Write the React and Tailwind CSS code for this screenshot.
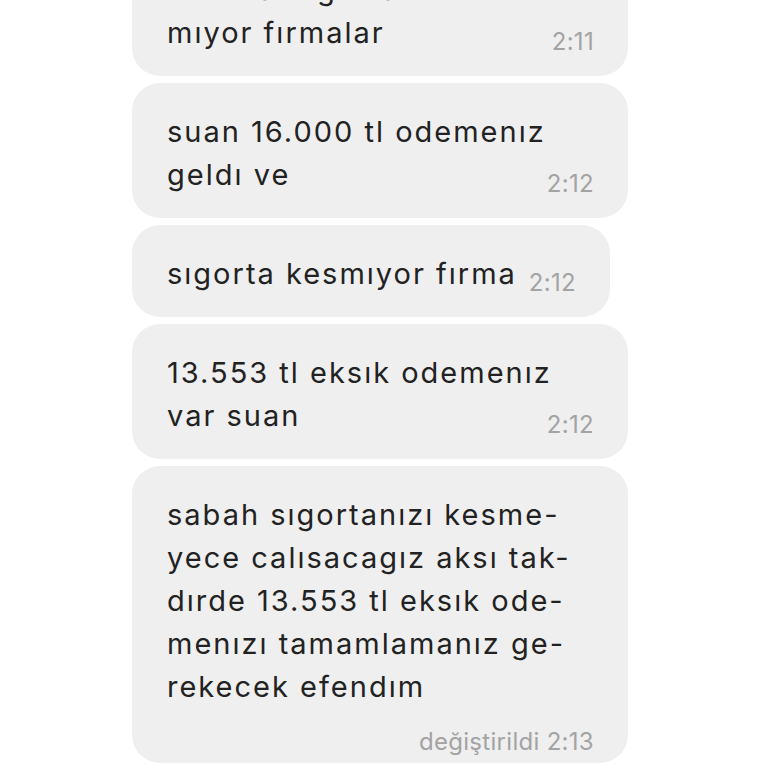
import React from "react";

const messages = [
  {
    lines: ["bu tutar sgorta kes-", "mıyor fırmalar"],
    time: "2:11",
  },
  {
    lines: ["suan 16.000 tl odemenız", "geldı ve"],
    time: "2:12",
  },
  {
    lines: ["sıgorta kesmıyor fırma"],
    time: "2:12",
    fit: true,
  },
  {
    lines: ["13.553 tl eksık odemenız", "var suan"],
    time: "2:12",
  },
  {
    lines: [
      "sabah sıgortanızı kesme-",
      "yece calısacagız aksı tak-",
      "dırde 13.553 tl eksık ode-",
      "menızı tamamlamanız ge-",
      "rekecek efendım",
    ],
    time: "2:13",
    edited: true,
  },
];

function Bubble({ lines, time, fit, edited }) {
  const last = lines[lines.length - 1];
  const rest = lines.slice(0, -1);

  return (
    <div
      className={`bg-[#efefef] rounded-[28px] pl-[35px] pr-[34px] pt-[27px] ${
        edited ? "pb-[6px]" : "pb-[22px]"
      } ${fit ? "w-fit" : "w-[496px]"}`}
    >
      {rest.map((l, i) => (
        <div key={i} className="leading-[43px] whitespace-nowrap">
          {l}
        </div>
      ))}

      {edited ? (
        <>
          <div className="leading-[43px] whitespace-nowrap">{last}</div>
          {/* footer */}
          <div className="mt-[19px] text-right text-[24px] leading-[30px] tracking-[0.3px] text-[#a3a3a3]">
            değiştirildi {time}
          </div>
        </>
      ) : (
        <div className="flex items-baseline justify-between gap-[12px] leading-[43px]">
          <span className="whitespace-nowrap">{last}</span>
          <span className="relative top-[7px] text-[24px] leading-none tracking-[0.3px] text-[#a3a3a3]">
            {time}
          </span>
        </div>
      )}
    </div>
  );
}

export default function App() {
  return (
    <div
      className="h-[768px] overflow-hidden bg-white text-[29px] tracking-[2px] text-[#222222]"
      style={{ fontFamily: "Inter, 'Noto Sans', sans-serif" }}
    >
      <div className="-mt-[59px] pl-[132px] flex flex-col gap-[7px]">
        {messages.map((m, i) => (
          <Bubble key={i} {...m} />
        ))}
      </div>
    </div>
  );
}
